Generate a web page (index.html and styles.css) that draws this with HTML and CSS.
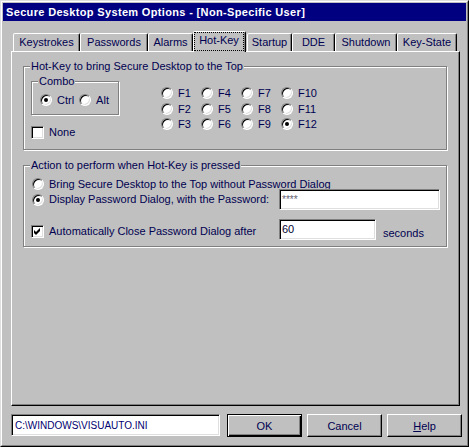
FILE: index.html
```html
<!DOCTYPE html>
<html>
<head>
<meta charset="utf-8">
<title>Secure Desktop System Options</title>
<link rel="stylesheet" href="styles.css">
</head>
<body>
<div class="window">
  <div class="frame">
    <div class="titlebar">Secure Desktop System Options - [Non-Specific User]</div>
    <div class="tabs">
      <div class="tab t-keystrokes">Keystrokes</div>
      <div class="tab t-passwords">Passwords</div>
      <div class="tab t-alarms">Alarms</div>
      <div class="tab tab-active t-hotkey"><span class="focus">Hot-Key</span></div>
      <div class="tab t-startup">Startup</div>
      <div class="tab t-dde">DDE</div>
      <div class="tab t-shutdown">Shutdown</div>
      <div class="tab t-keystate">Key-State</div>
    </div>
    <div class="panel">
      <div class="group group-hotkey">
        <div class="legend">Hot-Key to bring Secure Desktop to the Top</div>
        <div class="hotkey-row">
          <div class="left-col">
            <div class="group combo">
              <div class="legend">Combo</div>
              <div class="combo-row">
                <span class="opt"><span class="radio checked"></span><span class="lbl">Ctrl</span></span>
                <span class="opt"><span class="radio"></span><span class="lbl">Alt</span></span>
              </div>
            </div>
            <div class="opt none"><span class="check"></span><span class="lbl">None</span></div>
          </div>
          <div class="fkeys">
            <span class="opt"><span class="radio"></span><span class="lbl">F1</span></span>
            <span class="opt"><span class="radio"></span><span class="lbl">F4</span></span>
            <span class="opt"><span class="radio"></span><span class="lbl">F7</span></span>
            <span class="opt"><span class="radio"></span><span class="lbl">F10</span></span>
            <span class="opt"><span class="radio"></span><span class="lbl">F2</span></span>
            <span class="opt"><span class="radio"></span><span class="lbl">F5</span></span>
            <span class="opt"><span class="radio"></span><span class="lbl">F8</span></span>
            <span class="opt"><span class="radio"></span><span class="lbl">F11</span></span>
            <span class="opt"><span class="radio"></span><span class="lbl">F3</span></span>
            <span class="opt"><span class="radio"></span><span class="lbl">F6</span></span>
            <span class="opt"><span class="radio"></span><span class="lbl">F9</span></span>
            <span class="opt"><span class="radio checked"></span><span class="lbl">F12</span></span>
          </div>
        </div>
      </div>
      <div class="group group-action">
        <div class="legend">Action to perform when Hot-Key is pressed</div>
        <div class="opt act-row1"><span class="radio"></span><span class="lbl">Bring Secure Desktop to the Top without Password Dialog</span></div>
        <div class="act-row2">
          <span class="opt act-label"><span class="radio checked"></span><span class="lbl">Display Password Dialog, with the Password:</span></span>
          <div class="field pw">****</div>
        </div>
        <div class="act-row3">
          <span class="opt act-check"><span class="check"><svg width="11" height="11" viewBox="0 0 11 11"><path d="M2 4 L4 6 L8 2 L8 5 L4 9 L2 7 Z" fill="#000"/></svg></span><span class="lbl">Automatically Close Password Dialog after</span></span>
          <div class="field sec-field">60</div>
          <span class="seconds">seconds</span>
        </div>
      </div>
    </div>
    <div class="bottom">
      <div class="field path">C:\WINDOWS\VISUAUTO.INI</div>
      <button class="btn btn-default">OK</button>
      <button class="btn btn-cancel">Cancel</button>
      <button class="btn btn-help"><u>H</u>elp</button>
    </div>
  </div>
</div>
</body>
</html>
```

FILE: styles.css
```css
* { box-sizing: border-box; }
html, body { margin: 0; padding: 0; }
body {
  width: 469px;
  height: 447px;
  overflow: hidden;
  background: #c0c0c0;
  font-family: "Liberation Sans", Arial, sans-serif;
  font-size: 11px;
  line-height: 13px;
  color: #000050;
}
.window {
  width: 469px;
  height: 447px;
  border: 1px solid;
  border-color: #dfdfdf #000 #000 #dfdfdf;
  background: #c0c0c0;
}
.frame {
  height: 100%;
  border: 1px solid;
  border-color: #fff #808080 #808080 #fff;
  padding: 1px;
}
.titlebar {
  height: 18px;
  background: #000080;
  color: #fff;
  font-weight: bold;
  padding-left: 3px;
  line-height: 18px;
  letter-spacing: 0.34px;
  white-space: nowrap;
}
.tabs {
  display: flex;
  align-items: flex-end;
  height: 20px;
  margin: 10px 0 0 10px;
}
.tab {
  height: 18px;
  border: 1px solid;
  border-bottom: none;
  border-color: #fff #000 transparent #fff;
  box-shadow: inset -1px 0 #808080;
  border-radius: 2px 2px 0 0;
  display: flex;
  align-items: center;
  justify-content: center;
  white-space: nowrap;
  background: #c0c0c0;
}
.t-keystrokes { width: 67px; }
.t-passwords { width: 68px; }
.t-alarms { width: 45px; }
.t-hotkey { width: 53px; margin-right: 1px; }
.t-startup { width: 45px; }
.t-dde { width: 43px; }
.t-shutdown { width: 62px; }
.t-keystate { width: 60px; }
.tab-active {
  height: 21px;
  margin-bottom: -1px;
  position: relative;
  z-index: 1;
  align-items: flex-start;
  padding-right: 1px;
}
.focus {
  display: flex;
  align-items: center;
  justify-content: center;
  width: 100%;
  height: 19px;
  border: 1px dotted #000;
  padding-bottom: 2px;
}
.panel {
  width: 449px;
  height: 355px;
  margin-left: 8px;
  border: 1px solid;
  border-color: #fff #000 #000 #fff;
  box-shadow: inset -1px -1px #808080;
  padding: 14px 0 0 11px;
}
.group {
  border: 1px solid #808080;
  box-shadow: 1px 1px 0 #fff, inset 1px 1px 0 #fff;
}
.legend {
  width: fit-content;
  margin: -7px 0 0 6px;
  padding: 0 1px;
  background: #c0c0c0;
  white-space: nowrap;
}
.group-hotkey { width: 424px; height: 84px; }
.hotkey-row { display: flex; align-items: flex-start; }
.left-col { margin: 8px 0 0 7px; width: 89px; }
.combo { width: 88px; height: 34px; }
.combo-row { display: flex; gap: 5px; margin: 6px 0 0 8px; height: 12px; }
.opt {
  display: flex;
  align-items: center;
  gap: 5px;
  height: 12px;
  white-space: nowrap;
}
.none { margin-top: 11px; height: 13px; gap: 5px; }
.fkeys {
  display: grid;
  grid-template-columns: repeat(4, 40px);
  grid-template-rows: 16px 15px 15px;
  align-items: start;
  margin: 14px 0 0 41px;
}
.radio {
  flex: none;
  width: 12px;
  height: 12px;
  border-radius: 50%;
  background: #fff;
  border: 1px solid;
  border-color: #808080 #fff #fff #808080;
  box-shadow: inset 1px 1px #000, inset -1px -1px #dfdfdf;
  display: flex;
  align-items: center;
  justify-content: center;
}
.radio.checked::after {
  content: "";
  width: 4px;
  height: 4px;
  border-radius: 50%;
  background: #000;
}
.check {
  flex: none;
  width: 13px;
  height: 13px;
  background: #fff;
  border: 1px solid;
  border-color: #808080 #fff #fff #808080;
  box-shadow: inset 1px 1px #000, inset -1px -1px #dfdfdf;
}
.check svg { display: block; }
.group-action { width: 424px; height: 82px; margin-top: 15px; }
.act-row1 { margin: 6px 0 0 8px; }
.act-row2 {
  display: flex;
  align-items: center;
  height: 21px;
  margin: -1px 0 0 8px;
}
.act-label { width: 247px; }
.field {
  background: #fff;
  border: 1px solid;
  border-color: #808080 #fff #fff #808080;
  box-shadow: inset 1px 1px #000, inset -1px -1px #dfdfdf;
  padding: 0 3px 0 2px;
  display: flex;
  align-items: center;
  white-space: nowrap;
}
.pw { width: 161px; height: 21px; font-size: 10px; color: #606070; }
.act-row3 {
  display: flex;
  align-items: flex-start;
  margin: 9px 0 0 7px;
}
.act-check { width: 248px; height: 13px; margin-top: 6px; }
.sec-field { width: 97px; height: 21px; color: #000030; }
.seconds { margin: 8px 0 0 7px; }
.bottom {
  display: flex;
  align-items: flex-start;
  margin: 8px 0 0 8px;
}
.path {
  width: 209px;
  height: 22px;
  padding-left: 3px;
  font-size: 10px;
  color: #000070;
}
.btn {
  width: 75px;
  height: 23px;
  margin-left: 5px;
  padding: 0;
  background: #c0c0c0;
  font-family: "Liberation Sans", Arial, sans-serif;
  font-size: 11px;
  color: #000050;
  border: 1px solid;
  border-color: #fff #000 #000 #fff;
  box-shadow: inset -1px -1px #808080;
}
.btn-default {
  margin-left: 7px;
  border-color: #000;
  box-shadow: inset 1px 1px #fff, inset -1px -1px #000, inset -2px -2px #808080;
}
.btn u { text-decoration: underline; }
```
